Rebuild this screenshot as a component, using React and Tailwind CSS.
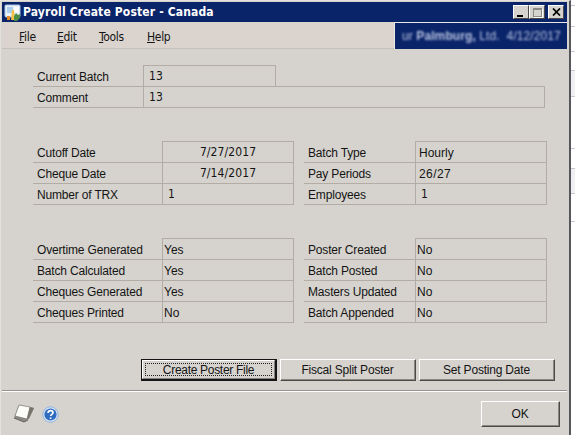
const line = "border-[#b2aca5]";

function Row({ label, value, labelW, valueW, first, center, pad = "pl-1", valueClass = "text-[12px] relative top-px" }) {
  return (
    <div className={`flex shrink-0 ${first ? "h-[22px]" : "h-[21px]"}`}>
      <div className={`${labelW} shrink-0 border-b ${line} flex items-end pl-1 pb-px`}>
        <span className="whitespace-nowrap text-[12px] leading-[15px] tracking-[-0.17px]">{label}</span>
      </div>
      <div className={`${valueW} shrink-0 border-b border-l border-r ${line} ${first ? "border-t" : ""} flex items-end pb-[3px] ${center ? "justify-center" : pad}`}>
        <span className={`whitespace-nowrap leading-[14px] ${valueClass}`}>{value}</span>
      </div>
    </div>
  );
}

function Button({ children, className = "", focused }) {
  if (focused) {
    return (
      <button className={`border border-r-2 border-b-2 border-[#141414] bg-[#d6d3ce] tracking-[-0.3px] ${className}`}>
        <span className="flex h-full w-full border border-t-white border-l-white border-r-[#85837f] border-b-[#85837f] p-[2px]">
          <span className="flex h-full w-full items-center justify-center border border-dotted border-[#222] whitespace-nowrap">{children}</span>
        </span>
      </button>
    );
  }
  return (
    <button className={`border border-t-white border-l-white border-r-[#4b4a47] border-b-[#4b4a47] bg-[#d6d3ce] tracking-[-0.2px] ${className}`}>
      <span className="flex h-full w-full items-center justify-center border-r border-b border-[#8b8882] whitespace-nowrap">{children}</span>
    </button>
  );
}

function WindowButton({ children }) {
  return (
    <span className="flex h-[14px] w-4 items-center justify-center border border-t-white border-l-white border-r-[#4b4a47] border-b-[#4b4a47] bg-[#d6d3ce]">
      {children}
    </span>
  );
}

function AppIcon() {
  return (
    <svg width="17" height="17" viewBox="0 0 17 17">
      <rect x="1" y="1" width="15" height="12" rx="1" fill="#e9f2fb" stroke="#a9c6e2" />
      <rect x="3" y="3" width="6" height="6" fill="#a9cdec" />
      <rect x="10" y="3" width="5" height="5" fill="#fff" />
      <path d="M3 16v-4h3v4z" fill="#e08a2c" />
      <path d="M7 16l1-10h2l1 10z" fill="#f3c04a" />
      <path d="M10 12l2-3 2 2 2-1v4l-3 3h-3z" fill="#4c8d48" />
    </svg>
  );
}

function NoteIcon() {
  return (
    <svg width="23" height="19" viewBox="0 0 23 19">
      <path d="M6 1L21 4l-5 11-5 3-10-4z" fill="#8b8980" />
      <path d="M6 1L17 3l-3 12L2 12z" fill="#fcfcf8" stroke="#66655e" strokeWidth=".6" />
      <path d="M17 3l4 1-5 10-2 1z" fill="#77756b" />
      <path d="M1 14l10 4 4-2" fill="none" stroke="#66645b" />
    </svg>
  );
}

function HelpIcon() {
  return (
    <svg width="17" height="17" viewBox="0 0 17 17">
      <circle cx="8.5" cy="8.5" r="7.7" fill="#d9e7f8" stroke="#8fb0dc" />
      <circle cx="8.5" cy="8.5" r="6.1" fill="#2f6cc0" />
      <path d="M6 7c0-3.2 5-3.2 5-.4 0 1.8-2.4 1.7-2.4 3.5M8.6 11.6v1.5" fill="none" stroke="#fff" strokeWidth="1.7" />
    </svg>
  );
}

const left = { labelW: "w-[129px]", valueW: "w-[132px]" };
const right = { labelW: "w-[111px]", valueW: "w-[132px]" };
const date = "font-['DejaVu_Sans_Condensed','DejaVu_Sans',sans-serif] text-[12px] tracking-[0.1px]";

export default function App() {
  return (
    <div className="flex h-[435px] w-[575px] overflow-hidden bg-white font-['Liberation_Sans',sans-serif] text-[12px] text-[#141414]">
      <div className="flex h-full w-[571px] shrink-0 flex-col border-t border-l border-r-2 border-t-[#e4e1dc] border-l-[#e4e1dc] border-r-[#55555b] bg-[#d6d3ce] pt-px pr-[2px] pl-px">
        <div className="flex h-5 shrink-0 items-center bg-[#0a246a] pr-[3px] pl-[2px] text-white">
          <AppIcon />
          <span className="ml-[2px] whitespace-nowrap font-['DejaVu_Sans_Condensed','DejaVu_Sans',sans-serif] text-[12px] font-bold tracking-[0.15px]">Payroll Create Poster - Canada</span>
          <div className="ml-auto flex items-center">
            <WindowButton><span className="mt-[7px] mr-[2px] h-[2px] w-[6px] bg-black" /></WindowButton>
            <WindowButton><span className="h-[9px] w-[9px] border border-t-2 border-[#8b8b86] shadow-[1px_1px_0_white]" /></WindowButton>
            <span className="w-[3px]" />
            <WindowButton>
              <svg width="9" height="8" viewBox="0 0 9 8"><path d="M1 .5l7 7M8 .5l-7 7" stroke="#000" strokeWidth="1.7" /></svg>
            </WindowButton>
          </div>
        </div>
        <div className="flex h-[27px] shrink-0">
          <div className="flex h-[27px] flex-1 items-center border-b border-[#c5c1bc] bg-[#dad3ce] pt-[3px] pl-[17px] font-['DejaVu_Sans_Condensed','DejaVu_Sans',sans-serif] text-[12px] tracking-[-0.3px]">
            <span className="w-[38px]"><u>F</u>ile</span>
            <span className="w-[42px]"><u>E</u>dit</span>
            <span className="w-[48px]"><u>T</u>ools</span>
            <span><u>H</u>elp</span>
          </div>
          <div className="flex w-[173px] items-center border-t border-l border-[#e9e7e4] bg-[#0a246a] pl-[7px] text-[#b9c4e0]">
            <span className="whitespace-pre text-[12px] tracking-[0.1px] blur-[1px]">ur <b>Palmburg,</b> Ltd.  4/12/2017</span>
          </div>
        </div>
        <div className="flex flex-col pt-4 pl-[31px]">
          <Row label="Current Batch" value="13" labelW="w-[110px]" valueW="w-[133px]" first pad="pl-[5px]" valueClass={date} />
          <Row label="Comment" value="13" labelW="w-[110px]" valueW="w-[402px]" pad="pl-[5px]" valueClass={date} />
          <div className="-mt-[22px] ml-[242px] h-px w-[270px] shrink-0 bg-[#b2aca5]" />
        </div>
        <div className="mt-[54px] flex gap-[10px] pl-[31px]">
          <div className="flex flex-col">
            <Row {...left} label="Cutoff Date" value="7/27/2017" first center valueClass={date} />
            <Row {...left} label="Cheque Date" value="7/14/2017" center valueClass={date} />
            <Row {...left} label="Number of TRX" value="1" pad="pl-[5px]" valueClass={date} />
          </div>
          <div className="flex flex-col">
            <Row {...right} label="Batch Type" value="Hourly" first pad="pl-[3px]" />
            <Row {...right} label="Pay Periods" value="26/27" pad="pl-[3px]" valueClass="relative top-px text-[12px] tracking-[0.4px]" />
            <Row {...right} label="Employees" value="1" pad="pl-[5px]" valueClass={date} />
          </div>
        </div>
        <div className="mt-[33px] flex gap-[10px] pl-[31px]">
          <div className="flex flex-col">
            <Row {...left} label="Overtime Generated" value="Yes" first pad="pl-px" />
            <Row {...left} label="Batch Calculated" value="Yes" pad="pl-px" />
            <Row {...left} label="Cheques Generated" value="Yes" pad="pl-px" />
            <Row {...left} label="Cheques Printed" value="No" pad="pl-px" />
          </div>
          <div className="flex flex-col">
            <Row {...right} label="Poster Created" value="No" first pad="pl-px" />
            <Row {...right} label="Batch Posted" value="No" pad="pl-px" />
            <Row {...right} label="Masters Updated" value="No" pad="pl-px" />
            <Row {...right} label="Batch Appended" value="No" pad="pl-px" />
          </div>
        </div>
        <div className="mt-[36px] flex gap-[3px] pl-[139px]">
          <Button focused className="h-[22px] w-[136px]">Create Poster File</Button>
          <Button className="h-[22px] w-[136px]">Fiscal Split Poster</Button>
          <Button className="h-[22px] w-[136px]">Set Posting Date</Button>
        </div>
        <div className="mt-[9px] h-[2px] shrink-0 border-t border-b border-t-[#96928d] border-b-white" />
        <div className="flex items-start pt-[9px] pl-[11px]">
          <div className="mt-[3px]"><NoteIcon /></div>
          <div className="mt-[5px] ml-[6px]"><HelpIcon /></div>
          <Button className="ml-auto mr-[7px] h-[26px] w-[79px]">OK</Button>
        </div>
      </div>
      <div className="flex flex-1 flex-col">
        <div className="h-[6px] border-b border-[#c8c8d0]" />
        <div className="h-[21px] border-b border-[#c8c8d0]" />
        <div className="h-[25px] border-b border-[#c8c8d0]" />
        <div className="h-[19px] border-b border-[#c8c8d0]" />
        <div className="h-[26px] border-b border-[#c8c8d0] bg-[#f0f0f2]" />
        <div className="h-[52px] border-b border-[#c8c8d0]" />
        <div className="h-[20px] border-b border-[#c8c8d0]" />
        <div className="h-[25px] border-b border-[#c8c8d0] bg-[#f0f0f2]" />
        <div className="h-[28px] border-b border-[#c8c8d0]" />
      </div>
    </div>
  );
}
